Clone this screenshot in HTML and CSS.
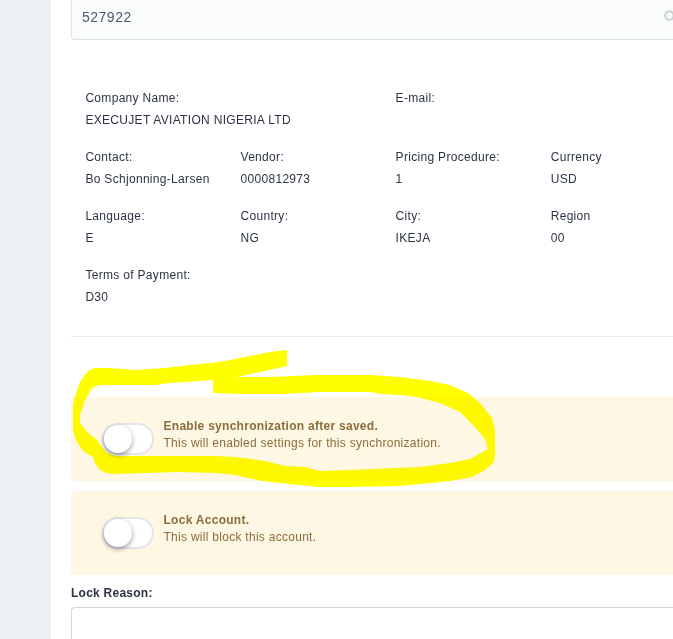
FILE: index.html
```html
<!DOCTYPE html>
<html lang="en">
<head>
<meta charset="utf-8">
<title>Account</title>
<link rel="stylesheet" href="styles.css">
</head>
<body>
<main class="page">
  <div class="search">
    <span class="search-value">527922</span>
    <svg class="search-icon" width="9" height="17" viewBox="0 0 9 17"><circle cx="5.4" cy="5.5" r="4.2"/><path d="M9 9l6 6"/></svg>
  </div>
  <dl class="details">
    <div class="wide"><dt>Company Name:</dt><dd>EXECUJET AVIATION NIGERIA LTD</dd></div>
    <div class="wide"><dt>E-mail:</dt><dd></dd></div>
    <div><dt>Contact:</dt><dd>Bo Schjonning-Larsen</dd></div>
    <div><dt>Vendor:</dt><dd>0000812973</dd></div>
    <div><dt>Pricing Procedure:</dt><dd>1</dd></div>
    <div><dt>Currency</dt><dd>USD</dd></div>
    <div><dt>Language:</dt><dd>E</dd></div>
    <div><dt>Country:</dt><dd>NG</dd></div>
    <div><dt>City:</dt><dd>IKEJA</dd></div>
    <div><dt>Region</dt><dd>00</dd></div>
    <div><dt>Terms of Payment:</dt><dd>D30</dd></div>
  </dl>
  <hr class="rule">
  <section class="notice">
    <span class="switch"><span class="knob"></span></span>
    <p class="notice-text"><strong>Enable synchronization after saved.</strong><br>This will enabled settings for this synchronization.</p>
  </section>
  <section class="notice">
    <span class="switch"><span class="knob"></span></span>
    <p class="notice-text"><strong>Lock Account.</strong><br>This will block this account.</p>
  </section>
  <div class="reason-label">Lock Reason:</div>
  <div class="reason-box"></div>
</main>
<svg class="marker" width="673" height="639" viewBox="0 0 673 639">
  <path d="M287 350L270 352L250 356L220 362L190 365L165 368L135 370L110 368L95 368Q90 369 87 372L80 382L75 396L73 405V430L76 440L83 451L93 457L95 463L100 470L106 473L115 474L145 473L178 472L215 473L235 475L262 481L290 484L318 487H345L400 486L450 481L472 477L485 470L494 462L495 455V430L492 418L480 403L468 393L450 385L430 381L400 377L370 375H316L270 377H237L260 372L287 366ZM213 380V393L240 394H285L320 392H370L380 394L400 395L417 397L440 403L460 412L473 425L485 439L488 449L470 459L450 463L420 467L350 470L320 471L305 467L285 466L265 461L235 457L215 456H115L107 453L100 445L97 440L88 433L80 423V415L85 400L92 388L100 385H155L170 383Z"/>
</svg>
</body>
</html>
```
FILE: styles.css
```css
* { box-sizing: border-box; }
body {
  margin: 0;
  height: 639px;
  overflow: hidden;
  background: #ebf0f5;
  color: #2c3444;
  font: 12px/22px "Liberation Sans", Arial, sans-serif;
  letter-spacing: 0.31px;
}
.page {
  height: 639px;
  margin-left: 51px;
  padding-left: 20px;
  overflow: hidden;
  background: #fff;
}
.search {
  display: flex;
  justify-content: space-between;
  align-items: flex-start;
  height: 40px;
  padding: 9px 0 0 10px;
  border: 1px solid #dde3e3;
  border-width: 0 0 1px 1px;
  border-radius: 0 0 0 4px;
  background: #fafcfc;
}
.search-value {
  color: #4b5873;
  font-size: 14px;
  line-height: 16px;
  letter-spacing: 0.5px;
}
.search-icon { flex: none; margin-top: 1px; fill: none; stroke: #ccd6d7; stroke-width: 2.2; }
.details {
  display: grid;
  grid-template-columns: repeat(4, 155.1px);
  row-gap: 15px;
  width: 587px;
  margin: 47px 0 0 14.4px;
}
.wide { grid-column: span 2; }
dt, dd { margin: 0; white-space: nowrap; }
.rule { height: 1px; margin: 28px 0 60px; border: 0; background: #ebebee; }
.notice {
  display: flex;
  height: 84px;
  margin-bottom: 10px;
  padding: 20px 0 20px 31px;
  border-radius: 4px 0 0 4px;
  background: #fdf7e3;
  color: #8b6d3f;
}
.switch {
  flex: none;
  width: 52px;
  height: 32px;
  margin: 6px 9.5px 0 0;
  border: 2px solid #e5e4e9;
  border-radius: 16px;
  background: #fff;
}
.knob {
  display: block;
  width: 28px;
  height: 28px;
  border-radius: 50%;
  background: #fff;
  box-shadow: 0 2px 5px rgba(0, 0, 0, .4);
}
.notice-text {
  margin: 1px 0 0;
  line-height: 17px;
  letter-spacing: 0.28px;
  white-space: nowrap;
}
.reason-label { color: #2c3444; font-weight: bold; line-height: 16px; letter-spacing: 0.25px; }
.reason-box {
  height: 32px;
  margin-top: 6px;
  border: 1px solid #d2d6e1;
  border-width: 1px 0 0 1px;
  border-radius: 4px 0 0 0;
}
.marker {
  position: absolute;
  top: 0;
  left: 0;
  fill: #ff0;
  mix-blend-mode: multiply;
  pointer-events: none;
}
```
